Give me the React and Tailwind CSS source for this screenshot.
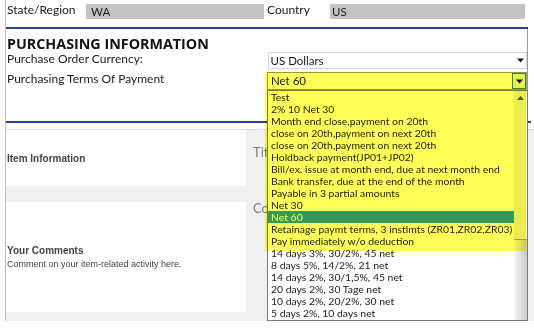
import React from "react";

const items = [
  "Test",
  "2% 10 Net 30",
  "Month end close,payment on 20th",
  "close on 20th,payment on next 20th",
  "close on 20th,payment on next 20th",
  "Holdback payment(JP01+JP02)",
  "Bill/ex. issue at month end, due at next month end",
  "Bank transfer, due at the end of the month",
  "Payable in 3 partial amounts",
  "Net 30",
  "Net 60",
  "Retainage paymt terms, 3 instlmts (ZR01,ZR02,ZR03)",
  "Pay immediately w/o deduction",
  "14 days 3%, 30/2%, 45 net",
  "8 days 5%, 14/2%, 21 net",
  "14 days 2%, 30/1,5%, 45 net",
  "20 days 2%, 30 Tage net",
  "10 days 2%, 20/2%, 30 net",
  "5 days 2%, 10 days net",
];

function Down() {
  return (
    <svg width="7" height="5" viewBox="0 0 7 5">
      <path d="M0 0.5 H7 L3.5 4.5 Z" fill="#111" />
    </svg>
  );
}

export default function App() {
  return (
    <div
      className="relative w-[534px] h-[328px] overflow-hidden bg-white text-[#1a1a1a]"
      style={{ fontFamily: 'Lato, "Open Sans", sans-serif' }}
    >
      <div className="ml-[5px] w-[529px] h-[321px] border-l border-[#bdbdbd] flex flex-col">
        {/* top row */}
        <div className="h-[27px] pt-[4px] flex text-[12px] leading-[15px]">
          <div className="w-[261px] flex">
            <div className="w-[80px] pl-[1px] -mt-[2px]">State/Region</div>
            <div className="w-[178px] h-[15px] bg-[#c3c3c3] pl-[5px] pt-[1px] text-[11.5px] leading-[14px]">WA</div>
          </div>
          <div className="flex">
            <div className="w-[63px] -mt-[2px]">Country</div>
            <div className="w-[195px] h-[15px] bg-[#c3c3c3] pl-[2px] pt-[1px] text-[11.5px] leading-[14px]">US</div>
          </div>
        </div>
        <div className="w-[522px] h-[2px] bg-[#2c3f93]" />
        {/* purchasing section */}
        <div className="w-[522px] h-[92px] border-r border-[#9a9a9a] pl-[1px] flex flex-col">
          <div
            className="mt-[6px] h-[17px] font-bold text-[14.3px] leading-[17px] text-[#111]"
            style={{ fontFamily: '"Open Sans", sans-serif' }}
          >
            PURCHASING INFORMATION
          </div>
          <div className="flex h-[20px]">
            <div className="w-[261px] text-[12px] leading-[13px]">Purchase Order Currency:</div>
            <div className="w-[260px] h-[17px] border border-[#d5d5d5] flex items-center justify-between pl-[2px] pr-[2px] text-[11.5px]">
              <span>US Dollars</span>
              <Down />
            </div>
          </div>
          <div className="flex h-[18px]">
            <div className="w-[261px] text-[12px] leading-[13px]">Purchasing Terms Of Payment</div>
            <div className="w-[261px] h-[18px] border border-[#9a9a9a] flex items-center justify-between pl-[3px] text-[11.5px]">
              <span>Net 60</span>
              <div className="w-[14px] h-[16px] bg-[#e5f1fb] border border-[#3c7fb1] flex items-center justify-center">
                <Down />
              </div>
            </div>
          </div>
        </div>
        <div className="w-[525px] h-[2px] bg-[#2c3f93]" />
        <div className="h-[6px] bg-white" />
        {/* lower section */}
        <div className="flex-1 bg-[#f0f0f0] border-t border-[#dedede] flex flex-col">
          <div className="flex h-[56px]">
            <div
              className="w-[240px] bg-white flex items-center pl-[1px] text-[10px] font-bold text-[#444]"
              style={{ fontFamily: '"Liberation Sans", sans-serif' }}
            >
              Item Information
            </div>
            <div className="pl-[7px] pt-[14px] text-[13px] text-[#7a7a7a] leading-[16px]">Title</div>
          </div>
          <div className="h-[16px]" />
          <div className="flex h-[110px]">
            <div
              className="w-[240px] bg-white flex flex-col justify-center pl-[1px] text-[#444]"
              style={{ fontFamily: '"Liberation Sans", sans-serif' }}
            >
              <div className="text-[10px] font-bold leading-[14px]">Your Comments</div>
              <div className="text-[9px] leading-[13px]">Comment on your item-related activity here.</div>
            </div>
            <div className="pl-[7px] -mt-[2px] text-[13px] text-[#7a7a7a] leading-[16px]">Comments</div>
          </div>
        </div>
      </div>

      {/* dropdown list */}
      <div className="absolute left-[267px] top-[90px] w-[261px] h-[231px] bg-white border border-[#7a7a7a] flex overflow-hidden">
        <div className="flex-1 min-w-0 overflow-hidden text-[10.4px]">
          {items.map((t, i) => (
            <div
              key={i}
              className={
                "h-[12px] leading-[12px] pl-[3px] whitespace-nowrap " +
                (i === 10 ? "bg-[#3399ff] text-white" : "")
              }
            >
              {t}
            </div>
          ))}
        </div>
        <div className="w-[13px] shrink-0 bg-[#ececec] flex flex-col">
          <div className="h-[14px] flex items-center justify-center">
            <svg width="7" height="4" viewBox="0 0 7 4">
              <path d="M0 4 H7 L3.5 0 Z" fill="#555" />
            </svg>
          </div>
          <div className="h-[134px]" />
          <div className="flex-1 border-t border-[#a0a0a0] bg-gradient-to-r from-[#f4f4f4] via-[#e0e0e0] to-[#cacaca]" />
        </div>
      </div>

      {/* yellow highlight annotation */}
      <div className="absolute left-[265px] top-[72px] w-[261px] h-[179px] bg-[#ffff57] mix-blend-multiply pointer-events-none" />
    </div>
  );
}
